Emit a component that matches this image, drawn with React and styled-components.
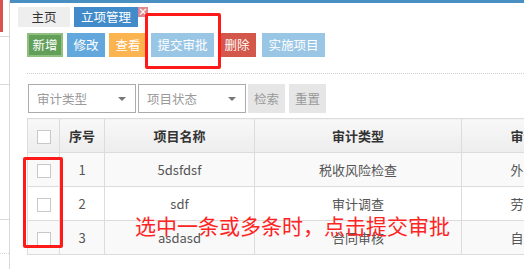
import React from 'react'
import styled, { createGlobalStyle } from 'styled-components'

const GlobalStyle = createGlobalStyle`
  html, body {
    margin: 0;
    padding: 0;
    background: #fff;
    overflow: hidden;
  }
  body {
    font-family: 'Noto Sans CJK SC', 'Liberation Sans', sans-serif;
    font-size: 13px;
    color: #333;
  }
`

const Page = styled.div`
  position: relative;
  display: flex;
  width: 524px;
  height: 269px;
  overflow: hidden;
`

const Sidebar = styled.div`
  width: 9px;
  flex: none;
  border-right: 1px solid #d8d8d8;
  display: flex;
  flex-direction: column;
`

const SideItem = styled.div`
  height: ${(p) => p.h}px;
  flex: none;
  border-bottom: 1px ${(p) => (p.dotted ? 'dotted' : 'solid')} #d8d8d8;
  box-sizing: border-box;
  display: flex;
`

const SideMark = styled.div`
  width: 3px;
  height: 32px;
  background: #d9534f;
`

const Main = styled.div`
  flex: 1;
  min-width: 0;
  border-top: 3px solid #4a8fc2;
  overflow: hidden;
`

const TabBar = styled.div`
  display: flex;
  gap: 4px;
  padding: 4px 0 0 8px;
`

const Tab = styled.div`
  position: relative;
  height: 20px;
  line-height: 20px;
  padding: 0 ${(p) => (p.active ? 7 : 13.5)}px;
  background: ${(p) => (p.active ? '#428bca' : '#eeeeee')};
  color: ${(p) => (p.active ? '#fff' : '#333')};
  font-size: 12.5px;
`

const TabClose = styled.span`
  position: absolute;
  top: 0;
  right: -10px;
  width: 10px;
  height: 10px;
  background: #e0888f;
  color: #fff;
  font-size: 10px;
  line-height: 9px;
  text-align: center;
  font-weight: bold;
`

const Content = styled.div`
  padding: 6px 0 0 17px;
`

const Toolbar = styled.div`
  display: flex;
  gap: 4px;
  padding-bottom: 16px;
  border-bottom: 1px dotted #cfcfcf;
`

const Btn = styled.div`
  height: 24px;
  line-height: 24px;
  padding: 0 6.5px;
  box-sizing: border-box;
  color: #fff;
  font-size: 12.5px;
  background: ${(p) => p.bg};
  margin-left: ${(p) => p.ml || 0}px;
  ${(p) =>
    p.focus &&
    `
    border: 2px solid #8fc07f;
    line-height: 20px;
    padding: 0 3.5px;
  `}
`

const FilterRow = styled.div`
  display: flex;
  margin-top: 10px;
  padding-left: 1px;
`

const Select = styled.div`
  width: 108px;
  height: 29px;
  box-sizing: border-box;
  border: 1px solid #ababab;
  margin-right: 2px;
  display: flex;
  align-items: center;
  justify-content: space-between;
  padding: 0 8px 0 8px;
  color: #9a9a9a;
  font-size: 12.5px;
`

const Caret = styled.span`
  width: 0;
  height: 0;
  border-left: 4px solid transparent;
  border-right: 4px solid transparent;
  border-top: 4px solid #777;
  margin-right: 1px;
`

const GrayBtn = styled.div`
  height: 29px;
  line-height: 29px;
  padding: 0 6px;
  background: #e6e6e6;
  color: #999;
  font-size: 12.5px;
  margin-right: 4px;
`

const Table = styled.table`
  margin-top: 5px;
  border-collapse: collapse;
  table-layout: fixed;
  width: 584px;
  font-size: 13px;
`

const Th = styled.th`
  width: ${(p) => p.w}px;
  height: 34px;
  box-sizing: border-box;
  border: 1px solid #dcdcdc;
  background: linear-gradient(#f8f8f8, #ededed);
  color: #333;
  font-weight: bold;
  text-align: center;
  padding: 0;
`

const Tr = styled.tr`
  background: ${(p) => (p.striped ? '#f9f9f9' : '#fff')};
`

const Td = styled.td`
  height: 34px;
  box-sizing: border-box;
  border: 1px solid #dcdcdc;
  color: #555;
  text-align: center;
  padding: 0;
  white-space: nowrap;
`

const Check = styled.span`
  display: inline-block;
  width: 14px;
  height: 14px;
  box-sizing: border-box;
  border: 1px solid #c8c8c8;
  background: #fff;
  vertical-align: middle;
`

const Mark = styled.div`
  position: absolute;
  left: ${(p) => p.x}px;
  top: ${(p) => p.y}px;
  width: ${(p) => p.w}px;
  height: ${(p) => p.h}px;
  box-sizing: border-box;
  border: 3px solid #ff1a1a;
  border-radius: 2px;
`

const Note = styled.div`
  position: absolute;
  left: 135px;
  top: 211px;
  color: #ff2424;
  font-size: 21px;
  line-height: 28px;
  white-space: nowrap;
`

const rows = [
  { no: 1, name: '5dsfdsf', type: '税收风险检查', last: '外部审计' },
  { no: 2, name: 'sdf', type: '审计调查', last: '劳务审计' },
  { no: 3, name: 'asdasd', type: '合同审核', last: '自主审计' },
]

export default function App() {
  return (
    <Page>
      <GlobalStyle />
      <Sidebar>
        <SideItem h={37}>
          <SideMark />
        </SideItem>
        <SideItem h={48} />
        <SideItem h={135} />
        <SideItem h={34} dotted />
      </Sidebar>
      <Main>
        <TabBar>
          <Tab>主页</Tab>
          <Tab active>
            立项管理
            <TabClose>×</TabClose>
          </Tab>
        </TabBar>
        <Content>
          <Toolbar>
            <Btn bg="#62a05a" focus>新增</Btn>
            <Btn bg="#62a8dd">修改</Btn>
            <Btn bg="#fbb450">查看</Btn>
            <Btn bg="#9ac6e6">提交审批</Btn>
            <Btn bg="#d3574a">删除</Btn>
            <Btn bg="#9ac6e6" ml={2}>实施项目</Btn>
          </Toolbar>
          <FilterRow>
            <Select>
              审计类型
              <Caret />
            </Select>
            <Select>
              项目状态
              <Caret />
            </Select>
            <GrayBtn>检索</GrayBtn>
            <GrayBtn>重置</GrayBtn>
          </FilterRow>
          <Table>
            <thead>
              <tr>
                <Th w={32}>
                  <Check />
                </Th>
                <Th w={45}>序号</Th>
                <Th w={150}>项目名称</Th>
                <Th w={207}>审计类型</Th>
                <Th w={150}>审计方式</Th>
              </tr>
            </thead>
            <tbody>
              {rows.map((r, i) => (
                <Tr key={r.no} striped={i % 2 === 0}>
                  <Td>
                    <Check />
                  </Td>
                  <Td>{r.no}</Td>
                  <Td>{r.name}</Td>
                  <Td>{r.type}</Td>
                  <Td>{r.last}</Td>
                </Tr>
              ))}
            </tbody>
          </Table>
        </Content>
      </Main>
      <Mark x={145} y={13} w={76} h={56} />
      <Mark x={23} y={157} w={40} h={91} />
      <Note>选中一条或多条时，点击提交审批</Note>
    </Page>
  )
}
